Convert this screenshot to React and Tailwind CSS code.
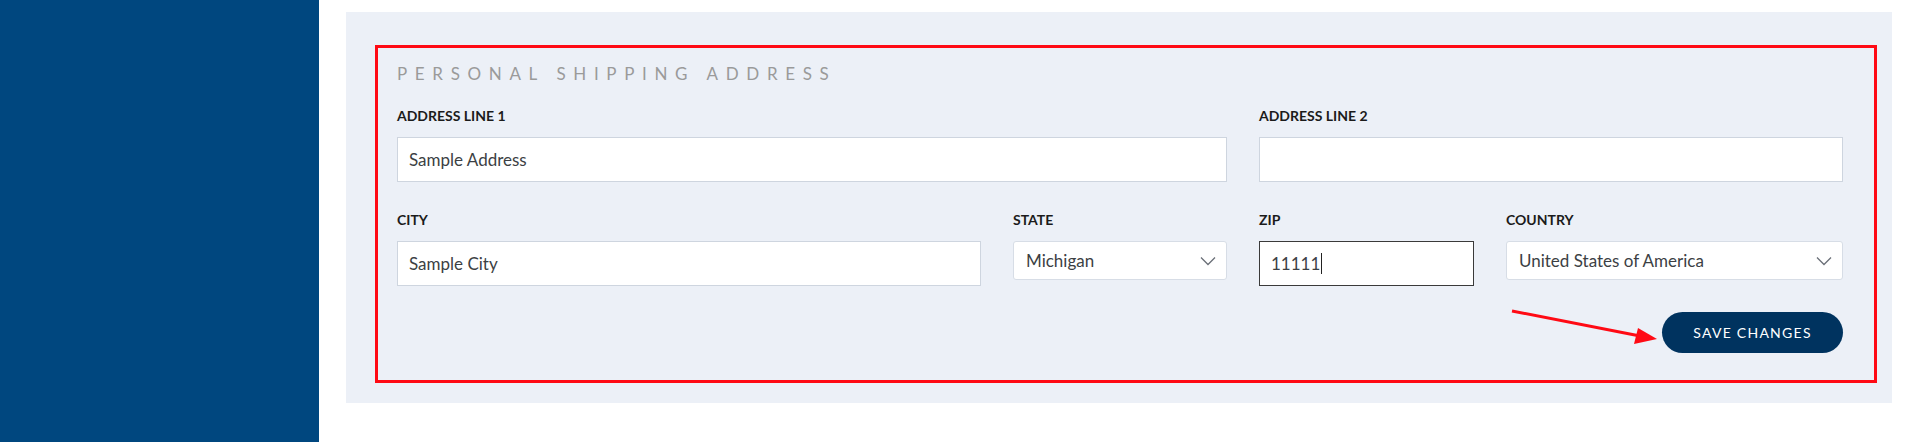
import { useState } from 'react';

const font = { fontFamily: 'Lato, "Open Sans", sans-serif' };

function Label({ children }) {
  return <div className="text-[14px] font-bold text-[#1b1b1b] leading-4 mb-[13px] h-4">{children}</div>;
}

function TextBox({ value, className = '', focused }) {
  return (
    <div
      className={`h-[45px] bg-white flex items-center px-[11px] text-[17px] text-[#3c3f44] border ${
        focused ? 'border-[#3a3a3a]' : 'border-[#ced5df]'
      } ${className}`}
    >
      <span>{value}</span>
      {focused && <span className="inline-block w-px h-[21px] bg-[#222] ml-px" />}
    </div>
  );
}

function Select({ value }) {
  return (
    <div className="h-[39px] bg-white flex items-center justify-between pl-[12px] pr-[10px] rounded-[3px] border border-[#d7dde6] text-[17px] text-[#3c3f44]">
      <span>{value}</span>
      <svg width="16" height="10" viewBox="0 0 16 10" fill="none">
        <path d="M1 1.5 L8 8.5 L15 1.5" stroke="#6b7078" strokeWidth="1.3" />
      </svg>
    </div>
  );
}

export default function App() {
  const [saved, setSaved] = useState(false);

  return (
    <div className="flex bg-white h-[442px] w-[1910px]" style={font}>
      <div className="w-[319px] shrink-0 bg-[#00477f]" />

      <div className="ml-[27px] mt-[12px] w-[1546px] h-[391px] bg-[#ecf0f7] pl-[29px] pr-[15px] pt-[33px]">
        {/* outlined section */}
        <div className="relative border-[3px] border-[#ff0a14] h-[338px] pl-[19px] pr-[31px] pt-[16px]">
          <h2 className="text-[17px] font-normal text-[#9a9a9a] tracking-[0.45em] leading-5 mb-[24px]">
            PERSONAL SHIPPING ADDRESS
          </h2>

          <div className="flex gap-[32px]">
            <div className="w-[830px]">
              <Label>ADDRESS LINE 1</Label>
              <TextBox value="Sample Address" />
            </div>
            <div className="flex-1">
              <Label>ADDRESS LINE 2</Label>
              <TextBox value="" />
            </div>
          </div>

          <div className="flex gap-[32px] mt-[30px]">
            <div className="w-[584px]">
              <Label>CITY</Label>
              <TextBox value="Sample City" />
            </div>
            <div className="w-[214px]">
              <Label>STATE</Label>
              <Select value="Michigan" />
            </div>
            <div className="w-[215px]">
              <Label>ZIP</Label>
              <TextBox value="11111" focused />
            </div>
            <div className="flex-1">
              <Label>COUNTRY</Label>
              <Select value="United States of America" />
            </div>
          </div>

          <div className="flex justify-end mt-[26px]">
            <button
              onClick={() => setSaved(!saved)}
              className="h-[41px] w-[181px] rounded-full bg-[#00335f] text-white text-[14px] tracking-[0.09em]"
            >
              SAVE CHANGES
            </button>
          </div>

          {/* annotation arrow */}
          <svg
            className="absolute left-[1132px] top-[258px] pointer-events-none"
            width="160"
            height="40"
            viewBox="0 0 160 40"
          >
            <line x1="2" y1="5" x2="130" y2="30" stroke="#ff0a14" strokeWidth="3" />
            <polygon points="147,33 124,38 128,22" fill="#ff0a14" />
          </svg>
        </div>
      </div>
    </div>
  );
}
